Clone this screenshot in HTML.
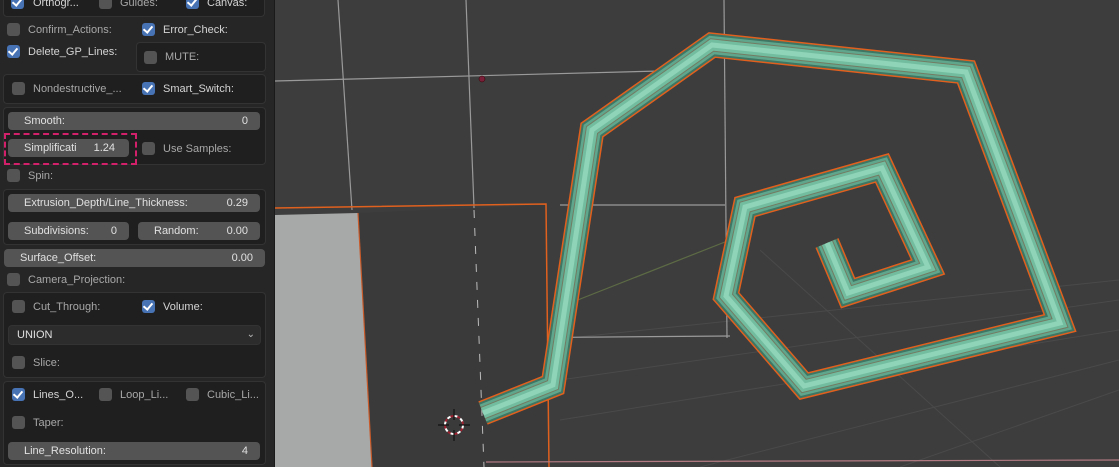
<!DOCTYPE html><html><head><style>
*{box-sizing:border-box;margin:0;padding:0}
body{width:1119px;height:467px;overflow:hidden;background:#3d3d3d;font-family:"Liberation Sans",sans-serif;font-size:11px;color:#d4d4d4;position:relative}
#p{position:absolute;left:0;top:0;width:275px;height:467px;background:#262626;border-right:1px solid #1a1a1a}
.bx{position:absolute;background:#1f1f1f;border:1px solid #333;border-radius:4px}
.cb{position:absolute;width:13px;height:13px;border-radius:3px;background:#545454}
.cb.on{background:#4772b3}
.cb.on::after{content:"";position:absolute;left:3px;top:1px;width:4px;height:7px;border:solid #fff;border-width:0 2px 2px 0;transform:rotate(40deg)}
.t{position:absolute;white-space:nowrap;line-height:13px}
.dim{color:#a8a8a8}
.f{position:absolute;height:18px;background:#545454;border-radius:4px;color:#e0e0e0;line-height:18px;padding:0 8px 0 16px}
.f span{position:absolute;right:12px;top:0}
</style></head><body>
<svg style="position:absolute;left:0;top:0" width="1119" height="467">
<g stroke="#4a4a4a" stroke-width="1" fill="none">
<line x1="550" y1="340" x2="1119" y2="280"/><line x1="560" y1="380" x2="1119" y2="300"/>
<line x1="560" y1="420" x2="1119" y2="330"/><line x1="700" y1="467" x2="1119" y2="360"/>
<line x1="900" y1="467" x2="1119" y2="390"/><line x1="760" y1="250" x2="1000" y2="467"/>
</g>
<line x1="565" y1="305" x2="730" y2="240" stroke="#5d6b45" stroke-width="1.2"/>
<g stroke="#9a9a9a" stroke-width="1.2" fill="none">
<line x1="338" y1="0" x2="352" y2="210"/><line x1="466" y1="0" x2="484" y2="467"/>
<line x1="724" y1="0" x2="727" y2="338"/>
<line x1="275" y1="81" x2="660" y2="71"/><line x1="560" y1="205" x2="725" y2="205"/>
<line x1="484" y1="338" x2="730" y2="336"/>
</g>
<polygon points="275,215 358,213 372,467 275,467" fill="#a7a8a8"/>
<polygon points="358,213 546,205 548,467 372,467" fill="#3a3a3a"/>
<path d="M275,208 L546,204 L549,467" stroke="#e0601e" stroke-width="1.5" fill="none"/>
<path d="M358,213 L372,467" stroke="#c85a2a" stroke-width="1.2"/>
<line x1="474" y1="210" x2="484" y2="467" stroke="#bbb" stroke-dasharray="8,10"/>
<line x1="486" y1="462" x2="1119" y2="460" stroke="#b27a82" stroke-width="1.2"/>
<circle cx="482" cy="79" r="3" fill="#7a1f3a" stroke="#300" stroke-width=".5"/>
<g fill="none" stroke-linejoin="miter" stroke-linecap="butt">
<path id="tp" d="M483,413 L553,385 L592,130 L712,45 L966,72 L1060,323 L804,386 L726,296 L745,207 L882,168 L928,267 L848,293 L827,243"/>
<use href="#tp" stroke="#e2601e" stroke-width="25"/>
<use href="#tp" stroke="#3f7563" stroke-width="22"/>
<use href="#tp" stroke="#5fa68c" stroke-width="18"/>
<use href="#tp" stroke="#7b6a50" stroke-width="13" stroke-opacity=".7"/>
<use href="#tp" stroke="#72bca0" stroke-width="11"/>
<use href="#tp" stroke="#8fd3b8" stroke-width="5"/>
</g>
<g transform="translate(454,425)">
<circle r="9" fill="none" stroke="#fff" stroke-width="2" stroke-dasharray="4,3"/>
<circle r="9" fill="none" stroke="#a02030" stroke-width="2" stroke-dasharray="3,4" stroke-dashoffset="3.5"/>
<path d="M0,-16V-5M0,5V16M-16,0H-5M5,0H16" stroke="#111" stroke-width="1.2"/>
</g>
</svg>
<div id="p">
<div class="bx" style="left:3px;top:-5px;width:262px;height:22px"></div>
<div class="cb on" style="left:11px;top:-4px"></div><div class="t" style="left:33px;top:-3px">Orthogr...</div>
<div class="cb" style="left:99px;top:-4px"></div><div class="t dim" style="left:120px;top:-3px">Guides:</div>
<div class="cb on" style="left:186px;top:-4px"></div><div class="t" style="left:207px;top:-3px">Canvas:</div>

<div class="cb" style="left:7px;top:23px"></div><div class="t dim" style="left:28px;top:24px">Confirm_Actions:</div>
<div class="cb on" style="left:142px;top:23px"></div><div class="t" style="left:163px;top:24px">Error_Check:</div>
<div class="cb on" style="left:7px;top:45px"></div><div class="t" style="left:28px;top:46px">Delete_GP_Lines:</div>
<div class="bx" style="left:136px;top:42px;width:130px;height:30px"></div>
<div class="cb" style="left:144px;top:51px"></div><div class="t dim" style="left:165px;top:51px">MUTE:</div>

<div class="bx" style="left:3px;top:74px;width:263px;height:30px"></div>
<div class="cb" style="left:12px;top:82px"></div><div class="t dim" style="left:33px;top:83px">Nondestructive_...</div>
<div class="cb on" style="left:142px;top:82px"></div><div class="t" style="left:163px;top:83px">Smart_Switch:</div>

<div class="bx" style="left:3px;top:107px;width:263px;height:58px"></div>
<div class="f" style="left:8px;top:112px;width:252px">Smooth:<span>0</span></div>
<div style="position:absolute;left:4px;top:133px;width:133px;height:32px;border:2px dashed #d2206a"></div>
<div class="f" style="left:8px;top:139px;width:121px;padding-left:16px">Simplificati<span style="right:14px">1.24</span></div>
<div class="cb" style="left:142px;top:142px"></div><div class="t dim" style="left:163px;top:143px">Use Samples:</div>
<div class="cb" style="left:7px;top:169px"></div><div class="t dim" style="left:28px;top:170px">Spin:</div>

<div class="bx" style="left:3px;top:189px;width:263px;height:56px"></div>
<div class="f" style="left:8px;top:194px;width:252px">Extrusion_Depth/Line_Thickness:<span>0.29</span></div>
<div class="f" style="left:8px;top:222px;width:121px">Subdivisions:<span>0</span></div>
<div class="f" style="left:138px;top:222px;width:122px;padding-left:16px">Random:<span>0.00</span></div>
<div class="f" style="left:4px;top:249px;width:261px">Surface_Offset:<span>0.00</span></div>
<div class="cb" style="left:7px;top:273px"></div><div class="t dim" style="left:28px;top:274px">Camera_Projection:</div>

<div class="bx" style="left:3px;top:292px;width:263px;height:86px"></div>
<div class="cb" style="left:12px;top:300px"></div><div class="t dim" style="left:33px;top:301px">Cut_Through:</div>
<div class="cb on" style="left:142px;top:300px"></div><div class="t" style="left:163px;top:301px">Volume:</div>
<div style="position:absolute;left:8px;top:325px;width:253px;height:20px;background:#2c2c2c;border-radius:4px;border:1px solid #333;line-height:18px;padding-left:8px;color:#e0e0e0">UNION<span style="position:absolute;right:5px;top:0;font-size:10px;color:#bbb">&#8964;</span></div>
<div class="cb" style="left:12px;top:356px"></div><div class="t dim" style="left:33px;top:357px">Slice:</div>

<div class="bx" style="left:3px;top:381px;width:263px;height:84px"></div>
<div class="cb on" style="left:12px;top:388px"></div><div class="t" style="left:33px;top:389px">Lines_O...</div>
<div class="cb" style="left:99px;top:388px"></div><div class="t dim" style="left:120px;top:389px">Loop_Li...</div>
<div class="cb" style="left:186px;top:388px"></div><div class="t dim" style="left:207px;top:389px">Cubic_Li...</div>
<div class="cb" style="left:12px;top:416px"></div><div class="t dim" style="left:33px;top:417px">Taper:</div>
<div class="f" style="left:8px;top:442px;width:252px">Line_Resolution:<span>4</span></div>
</div>
</body></html>
